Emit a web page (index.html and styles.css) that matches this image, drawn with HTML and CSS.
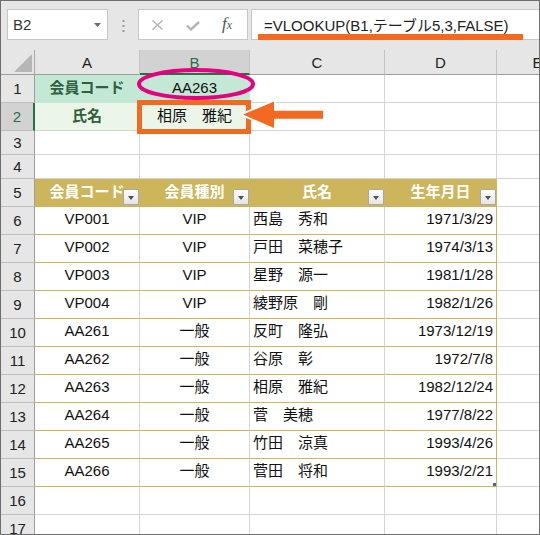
FILE: index.html
```html
<!DOCTYPE html>
<html lang="ja">
<head>
<meta charset="utf-8">
<title>VLOOKUP</title>
<link rel="stylesheet" href="styles.css">
</head>
<body>
<div class="window">
  <div class="fbar">
    <div class="namebox"><span class="nbtext">B2</span><svg class="caret" width="7" height="4" viewBox="0 0 7 4"><path d="M0 0H7L3.5 4Z" fill="#6b6b6b"/></svg></div>
    <svg class="dots" width="3" height="13" viewBox="0 0 3 13"><rect x="0.5" y="0" width="2" height="2" fill="#9a9a9a"/><rect x="0.5" y="5" width="2" height="2" fill="#9a9a9a"/><rect x="0.5" y="10" width="2" height="2" fill="#9a9a9a"/></svg>
    <div class="btns">
      <svg class="ico-x" width="11" height="10" viewBox="0 0 11 10"><path d="M0.5 0.5L10.5 9.5M10.5 0.5L0.5 9.5" stroke="#b4b4b4" stroke-width="1.5" fill="none"/></svg>
      <svg class="ico-ok" width="14" height="10" viewBox="0 0 14 10"><path d="M1 4.5L5 8.5L13 1" stroke="#b4b4b4" stroke-width="2.4" fill="none"/></svg>
      <span class="fx">f<span class="fxx">x</span></span>
    </div>
    <div class="formula">=VLOOKUP(B1,テーブル5,3,FALSE)</div>
  </div>

  <div class="sheet">
    <div class="ch corner"><svg width="33" height="24" viewBox="0 0 33 24"><polygon points="13,22 31,4 31,22" fill="#b6b6b6"/></svg></div>
    <div class="ch">A</div><div class="ch selb">B</div><div class="ch">C</div><div class="ch">D</div><div class="ch">E</div>

    <div class="rh">1</div><div class="c k1 bold up2 k1r">会員コード</div><div class="c k1 up2">AA263</div><div class="c"></div><div class="c"></div><div class="c"></div>

    <div class="rh sel2">2</div><div class="c k2 bold up2">氏名</div><div class="c k2 up2">相原　雅紀</div><div class="c"></div><div class="c"></div><div class="c"></div>

    <div class="rh">3</div><div class="c"></div><div class="c"></div><div class="c"></div><div class="c"></div><div class="c"></div>
    <div class="rh">4</div><div class="c"></div><div class="c"></div><div class="c"></div><div class="c"></div><div class="c"></div>

    <div class="rh">5</div>
    <div class="c th">会員コード<span class="dd"></span></div>
    <div class="c th">会員種別<span class="dd"></span></div>
    <div class="c th">氏名<span class="dd"></span></div>
    <div class="c th">生年月日<span class="dd"></span></div>
    <div class="c"></div>

    <div class="rh">6</div><div class="c tb up">VP001</div><div class="c tb up">VIP</div><div class="c tb up l">西島　秀和</div><div class="c tb tr up r">1971/3/29</div><div class="c"></div>
    <div class="rh">7</div><div class="c tb up">VP002</div><div class="c tb up">VIP</div><div class="c tb up l">戸田　菜穂子</div><div class="c tb tr up r">1974/3/13</div><div class="c"></div>
    <div class="rh">8</div><div class="c tb up">VP003</div><div class="c tb up">VIP</div><div class="c tb up l">星野　源一</div><div class="c tb tr up r">1981/1/28</div><div class="c"></div>
    <div class="rh">9</div><div class="c tb up">VP004</div><div class="c tb up">VIP</div><div class="c tb up l">綾野原　剛</div><div class="c tb tr up r">1982/1/26</div><div class="c"></div>
    <div class="rh">10</div><div class="c tb up">AA261</div><div class="c tb up">一般</div><div class="c tb up l">反町　隆弘</div><div class="c tb tr up r">1973/12/19</div><div class="c"></div>
    <div class="rh">11</div><div class="c tb up">AA262</div><div class="c tb up">一般</div><div class="c tb up l">谷原　彰</div><div class="c tb tr up r">1972/7/8</div><div class="c"></div>
    <div class="rh">12</div><div class="c tb up">AA263</div><div class="c tb up">一般</div><div class="c tb up l">相原　雅紀</div><div class="c tb tr up r">1982/12/24</div><div class="c"></div>
    <div class="rh">13</div><div class="c tb up">AA264</div><div class="c tb up">一般</div><div class="c tb up l">菅　美穂</div><div class="c tb tr up r">1977/8/22</div><div class="c"></div>
    <div class="rh">14</div><div class="c tb up">AA265</div><div class="c tb up">一般</div><div class="c tb up l">竹田　涼真</div><div class="c tb tr up r">1993/4/26</div><div class="c"></div>
    <div class="rh">15</div><div class="c tb up">AA266</div><div class="c tb up">一般</div><div class="c tb up l">菅田　将和</div><div class="c tb tr up r">1993/2/21<span class="handle"></span></div><div class="c"></div>

    <div class="rh">16</div><div class="c"></div><div class="c"></div><div class="c"></div><div class="c"></div><div class="c"></div>
    <div class="rh">17</div><div class="c"></div><div class="c"></div><div class="c"></div><div class="c"></div><div class="c"></div>
  </div>

  <div class="uline"></div>
  <svg class="ellipse" width="118" height="32" viewBox="0 0 118 32"><ellipse cx="59" cy="16" rx="57" ry="14" fill="none" stroke="#e4007f" stroke-width="4"/></svg>
  <div class="orect"></div>
  <svg class="arrow" width="90" height="38" viewBox="0 0 90 38"><polygon points="4,17.5 35,4.5 35,13.7 84,13.7 84,21.7 35,21.7 35,31 " fill="#f26a21" stroke="#ffffff" stroke-width="4" stroke-linejoin="round" paint-order="stroke"/></svg>
</div>
</body>
</html>
```

FILE: styles.css
```css
html, body {
  margin: 0;
  padding: 0;
  background: #ffffff;
}

.window {
  position: relative;
  width: 540px;
  height: 535px;
  box-sizing: border-box;
  border: 1px solid #6e6e6e;
  overflow: hidden;
  font-family: "Liberation Sans", "Noto Sans CJK JP", sans-serif;
  font-size: 15px;
  color: #111;
  background: #ffffff;
}

/* formula bar */
.fbar {
  height: 49px;
  box-sizing: border-box;
  background: #e6e6e6;
  display: flex;
  align-items: flex-start;
  padding: 8px 0 0 6px;
}

.namebox {
  width: 101px;
  height: 31px;
  box-sizing: border-box;
  border: 1px solid #c6c6c6;
  background: #ffffff;
  display: flex;
  align-items: center;
  padding-left: 5px;
  color: #333;
}

.caret {
  margin-left: auto;
  margin-right: 6px;
  margin-top: 1px;
}

.dots {
  margin: 11px 0 0 14px;
}

.btns {
  margin-left: 13px;
  width: 110px;
  height: 31px;
  box-sizing: border-box;
  border: 1px solid #c6c6c6;
  background: #ffffff;
  display: flex;
  align-items: center;
  padding-left: 13px;
}

.ico-x {
  margin-top: 1px;
}

.ico-ok {
  margin-left: 23px;
  margin-top: 2px;
}

.fx {
  margin-left: 22px;
  font-family: "Liberation Serif", serif;
  font-style: italic;
  font-size: 17px;
  color: #555;
  line-height: 17px;
}

.fxx {
  font-size: 12px;
}

.formula {
  margin-left: 3px;
  flex: 1;
  height: 31px;
  box-sizing: border-box;
  border: 1px solid #c6c6c6;
  border-right: none;
  background: #ffffff;
  display: flex;
  align-items: center;
  padding-left: 12px;
  white-space: nowrap;
  color: #222;
}

/* sheet grid */
.sheet {
  display: grid;
  grid-template-columns: 34px 105px 110px 135px 112px 82px;
  grid-template-rows: 25px 28px 28px 24px 24px repeat(12, 28px) 28px;
}

.sheet > div {
  box-sizing: border-box;
  display: flex;
  align-items: center;
  justify-content: center;
  white-space: nowrap;
  overflow: hidden;
  line-height: 17px;
  position: relative;
}

.ch {
  background: #e6e6e6;
  border-right: 1px solid #c4c4c4;
  border-bottom: 1px solid #9e9e9e;
  color: #222;
}

.ch.corner {
  border-right-color: #a8a8a8;
  align-items: flex-start;
  justify-content: flex-start;
}

.ch.selb {
  background: #d2d2d2;
  color: #217346;
  border-bottom: 2px solid #217346;
  padding-top: 1px;
}

.rh {
  background: #e6e6e6;
  border-right: 1px solid #9e9e9e;
  border-bottom: 1px solid #bdbdbd;
  color: #222;
}

.rh.sel2 {
  background: #d2d2d2;
  color: #217346;
  border-right: 2px solid #217346;
}

.c {
  border-right: 1px solid #d4d4d4;
  border-bottom: 1px solid #d4d4d4;
}

.up {
  padding-bottom: 4px;
}

.up2 {
  padding-bottom: 3px;
}

.l {
  justify-content: flex-start !important;
  padding-left: 3px;
}

.r {
  justify-content: flex-end !important;
  padding-right: 3px;
}

.bold {
  font-weight: bold;
  color: #2f5f3c;
}

.k1 {
  background: #c4e8d6;
  border-right-color: #c4e8d6;
  border-bottom-color: #c4e8d6;
}

.k2 {
  background: #ecf6e8;
  border-right-color: #ecf6e8;
}

/* table */
.th {
  background: #ccb55a;
  border-right-color: #ccb55a;
  border-bottom-color: #ccb55a;
  color: #ffffff;
  font-weight: bold;
  padding-bottom: 3px;
}

.dd {
  position: absolute;
  right: 0;
  bottom: 1px;
  width: 16px;
  height: 16px;
  box-sizing: border-box;
  border: 1px solid #a9a9a9;
  background: linear-gradient(#ffffff, #e4e4e4);
}

.dd::after {
  content: "";
  position: absolute;
  left: 4px;
  top: 6px;
  border-left: 3.5px solid transparent;
  border-right: 3.5px solid transparent;
  border-top: 4px solid #505050;
}

.tb {
  border-bottom-color: #ccb55a;
}

.tr {
  border-right-color: #ccb55a;
}

.handle {
  position: absolute;
  right: 0;
  bottom: 0;
  width: 3px;
  height: 3px;
  background: #4e5fa8;
}

/* annotations */
.uline {
  position: absolute;
  left: 257px;
  top: 33px;
  width: 265px;
  height: 6px;
  background: #f26a21;
}

.ellipse {
  position: absolute;
  left: 136px;
  top: 67px;
}

.orect {
  position: absolute;
  left: 136px;
  top: 99px;
  width: 114px;
  height: 34px;
  box-sizing: border-box;
  border: 5px solid #f26a21;
}

.arrow {
  position: absolute;
  left: 238px;
  top: 96px;
}
```
